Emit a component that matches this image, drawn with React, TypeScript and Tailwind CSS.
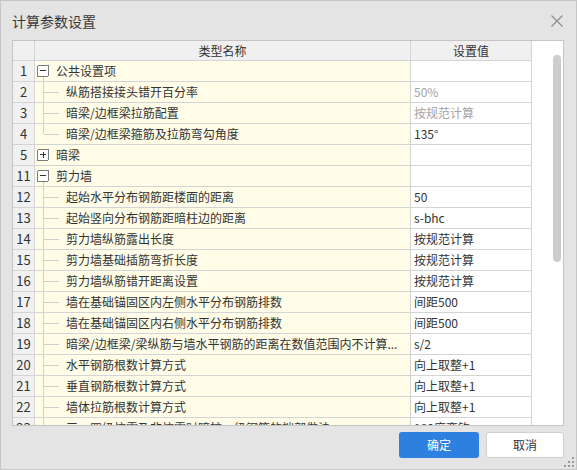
import React from "react";

type Row = {
  n: string;
  name: string;
  value?: string;
  grey?: boolean;
  kind: "parent-open" | "parent-closed" | "child" | "child-last";
};

const rows: Row[] = [
  { n: "1", name: "公共设置项", kind: "parent-open" },
  { n: "2", name: "纵筋搭接接头错开百分率", value: "50%", grey: true, kind: "child" },
  { n: "3", name: "暗梁/边框梁拉筋配置", value: "按规范计算", grey: true, kind: "child" },
  { n: "4", name: "暗梁/边框梁箍筋及拉筋弯勾角度", value: "135°", kind: "child-last" },
  { n: "5", name: "暗梁", kind: "parent-closed" },
  { n: "11", name: "剪力墙", kind: "parent-open" },
  { n: "12", name: "起始水平分布钢筋距楼面的距离", value: "50", kind: "child" },
  { n: "13", name: "起始竖向分布钢筋距暗柱边的距离", value: "s-bhc", kind: "child" },
  { n: "14", name: "剪力墙纵筋露出长度", value: "按规范计算", kind: "child" },
  { n: "15", name: "剪力墙基础插筋弯折长度", value: "按规范计算", kind: "child" },
  { n: "16", name: "剪力墙纵筋错开距离设置", value: "按规范计算", kind: "child" },
  { n: "17", name: "墙在基础锚固区内左侧水平分布钢筋排数", value: "间距500", kind: "child" },
  { n: "18", name: "墙在基础锚固区内右侧水平分布钢筋排数", value: "间距500", kind: "child" },
  { n: "19", name: "暗梁/边框梁/梁纵筋与墙水平钢筋的距离在数值范围内不计算...", value: "s/2", kind: "child" },
  { n: "20", name: "水平钢筋根数计算方式", value: "向上取整+1", kind: "child" },
  { n: "21", name: "垂直钢筋根数计算方式", value: "向上取整+1", kind: "child" },
  { n: "22", name: "墙体拉筋根数计算方式", value: "向上取整+1", kind: "child" },
  { n: "23", name: "三、四级抗震及非抗震时暗柱一级钢筋的端部做法", value: "180度弯钩", kind: "child" },
];

function TreeIcon({ kind }: { kind: Row["kind"] }) {
  if (kind === "parent-open" || kind === "parent-closed") {
    return (
      <svg width="13" height="20" className="ml-[2px] shrink-0" shapeRendering="crispEdges">
        <rect x="0.5" y="4.5" width="11" height="11" rx="1.5" fill="#fff" stroke="#7a7a7a" />
        <rect x="3" y="9" width="6" height="1" fill="#333" />
        {kind === "parent-closed" && <rect x="5.5" y="6.5" width="1" height="6" fill="#333" />}
        {kind === "parent-open" && <rect x="6" y="16" width="1" height="4" fill="#cfcfcf" />}
      </svg>
    );
  }
  return (
    <svg width="31" height="20" className="shrink-0" shapeRendering="crispEdges">
      <rect x="8" y="0" width="1" height={kind === "child-last" ? 10 : 20} fill="#cfcfcf" />
      <rect x="9" y="10" width="15" height="1" fill="#cfcfcf" />
    </svg>
  );
}

export default function App() {
  return (
    <div className="relative w-[577px] h-[470px] bg-[#e4e4e4] border border-[#c6c6c6] flex flex-col text-[#333] font-['Noto_Sans_CJK_SC','Noto_Sans',sans-serif] overflow-hidden">
      <div className="h-[39px] shrink-0 flex items-center justify-between pl-[11px] pr-[12px]">
        <span className="text-[14px] leading-[20px] text-[#3a3a3a]">计算参数设置</span>
        <svg width="12" height="12" viewBox="0 0 12 12" className="mr-[1px]">
          <path d="M0.5 0.5 L11.5 11.5 M11.5 0.5 L0.5 11.5" stroke="#8a8a8a" strokeWidth="1.1" fill="none" />
        </svg>
      </div>

      <div className="mx-[11px] w-[552px] h-[386px] shrink-0 border border-[#c4c4c4] bg-white flex overflow-hidden text-[12px] leading-[20px]">
        <div className="w-[519px] flex flex-col shrink-0">
          <div className="flex h-[20px] shrink-0 border-b border-[#d4d4d4] bg-[#f0f0f0]">
            <div className="w-[22px] border-r border-[#d4d4d4]" />
            <div className="w-[376px] border-r border-[#d4d4d4] text-center">类型名称</div>
            <div className="w-[121px] border-r border-[#d4d4d4] text-center">设置值</div>
          </div>
          {rows.map((r) => (
            <div key={r.n} className="flex h-[21px] shrink-0 border-b border-[#d4d4d4]">
              <div className="w-[22px] shrink-0 border-r border-[#d4d4d4] bg-[#f1f1f1] text-center text-[13px] leading-[20px]">
                {r.n}
              </div>
              <div className="w-[376px] shrink-0 border-r border-[#d4d4d4] bg-[#fffde8] flex items-center whitespace-nowrap overflow-hidden">
                <TreeIcon kind={r.kind} />
                <span className={r.kind.startsWith("parent") ? "ml-[6px]" : ""}>{r.name}</span>
              </div>
              <div
                className={
                  "w-[121px] shrink-0 border-r border-[#d4d4d4] bg-white pl-[3px] whitespace-nowrap " +
                  (r.grey ? "text-[#a3a3a3]" : "text-[#333]")
                }
              >
                {r.value ?? ""}
              </div>
            </div>
          ))}
        </div>
        <div className="flex-1 flex justify-end pt-[14px] pr-[2px]">
          <div className="w-[8px] h-[207px] rounded-full bg-[#cdcdcd]" />
        </div>
      </div>

      <div className="mt-[6px] flex justify-end gap-[7px] pr-[12px]">
        <button className="w-[80px] h-[26px] rounded-[3px] bg-[#2e80e0] text-white text-[12px] leading-[26px]">
          确定
        </button>
        <button className="w-[78px] h-[26px] rounded-[3px] bg-white border border-[#d0d0d0] text-[#333] text-[12px] leading-[24px]">
          取消
        </button>
      </div>

      <svg width="11" height="11" className="absolute right-[1px] bottom-[1px]" shapeRendering="crispEdges">
        <rect x="8" y="0" width="2" height="2" fill="#9a9a9a" />
        <rect x="4" y="4" width="2" height="2" fill="#9a9a9a" />
        <rect x="8" y="4" width="2" height="2" fill="#9a9a9a" />
        <rect x="0" y="8" width="2" height="2" fill="#9a9a9a" />
        <rect x="4" y="8" width="2" height="2" fill="#9a9a9a" />
        <rect x="8" y="8" width="2" height="2" fill="#9a9a9a" />
      </svg>
    </div>
  );
}
